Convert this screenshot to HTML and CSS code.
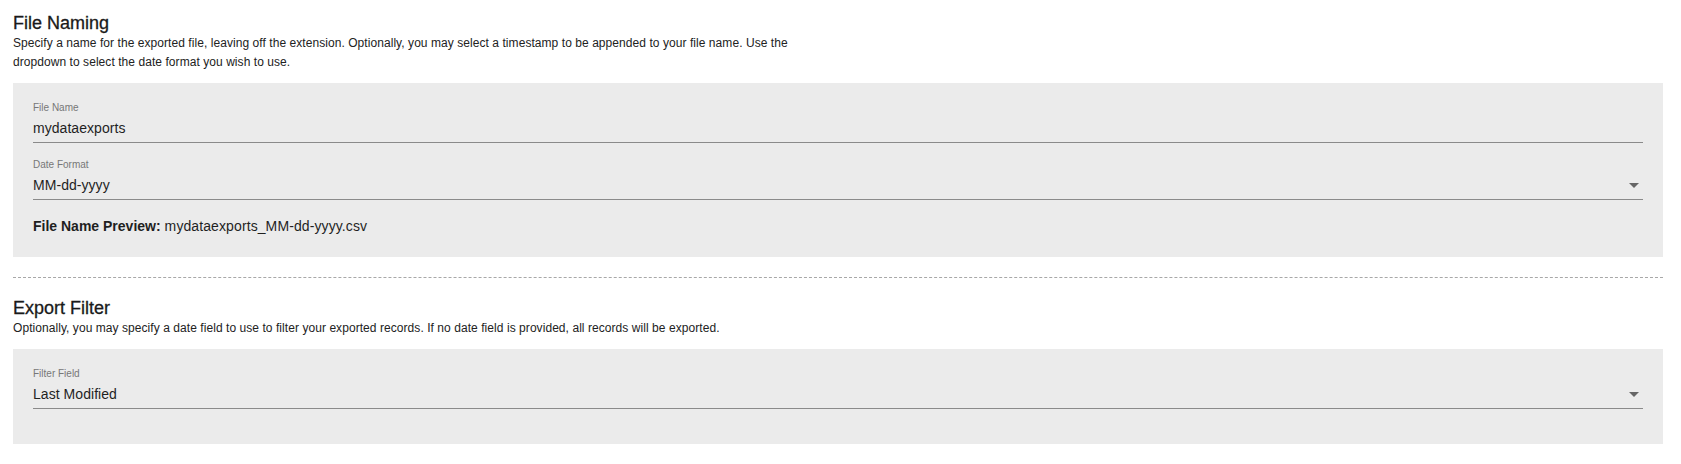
FILE: index.html
```html
<!DOCTYPE html>
<html lang="en">
<head>
<meta charset="utf-8">
<title>Export Settings</title>
<link rel="stylesheet" href="styles.css">
</head>
<body>
<main class="page">
  <section class="section">
    <h2 class="section-title">File Naming</h2>
    <p class="section-desc">Specify a name for the exported file, leaving off the extension. Optionally, you may select a timestamp to be appended to your file name. Use the dropdown to select the date format you wish to use.</p>
    <div class="panel">
      <div class="field">
        <label class="field-label">File Name</label>
        <div class="field-input">mydataexports</div>
      </div>
      <div class="field">
        <label class="field-label">Date Format</label>
        <div class="field-input select">MM-dd-yyyy<span class="caret"></span></div>
      </div>
      <p class="preview"><strong>File Name Preview:</strong> mydataexports_MM-dd-yyyy.csv</p>
    </div>
  </section>
  <hr class="divider">
  <section class="section">
    <h2 class="section-title">Export Filter</h2>
    <p class="section-desc">Optionally, you may specify a date field to use to filter your exported records. If no date field is provided, all records will be exported.</p>
    <div class="panel panel-filter">
      <div class="field">
        <label class="field-label">Filter Field</label>
        <div class="field-input select">Last Modified<span class="caret"></span></div>
      </div>
    </div>
  </section>
</main>
</body>
</html>
```
FILE: styles.css
```css
html, body {
  margin: 0;
  padding: 0;
  background: #ffffff;
}
body {
  font-family: "Liberation Sans", Arial, Helvetica, sans-serif;
  color: #222222;
}
.page {
  padding: 12px 18px 0 13px;
}
.section-title {
  margin: 0;
  font-size: 18px;
  line-height: 22px;
  font-weight: 400;
  color: #1a1a1a;
  -webkit-text-stroke: 0.3px #1a1a1a;
}
.section-desc {
  margin: 0;
  max-width: 800px;
  font-size: 12px;
  line-height: 19px;
  letter-spacing: 0.06px;
  color: #222222;
}
.panel {
  margin-top: 11px;
  background: #ebebeb;
  padding: 18px 20px 6px;
}
.panel-filter {
  padding-bottom: 20px;
}
.field {
  margin-bottom: 15px;
}
.field-label {
  display: block;
  font-size: 10px;
  line-height: 14px;
  color: #777777;
}
.field-input {
  position: relative;
  font-size: 14px;
  line-height: 20px;
  padding: 3px 0 4px;
  border-bottom: 1px solid #8a8a8a;
  color: #1f1f1f;
  letter-spacing: 0.05px;
}
.caret {
  position: absolute;
  right: 4px;
  top: 11px;
  width: 0;
  height: 0;
  border-left: 5px solid transparent;
  border-right: 5px solid transparent;
  border-top: 5px solid #666666;
}
.preview {
  margin: 16px 0 15px;
  font-size: 14px;
  line-height: 20px;
  color: #1f1f1f;
  letter-spacing: 0.1px;
}
.preview strong {
  font-weight: 700;
  letter-spacing: 0;
}
.divider {
  margin: 20px 0 19px;
  border: 0;
  border-top: 1px dashed #a8a8a8;
  height: 0;
}
```
